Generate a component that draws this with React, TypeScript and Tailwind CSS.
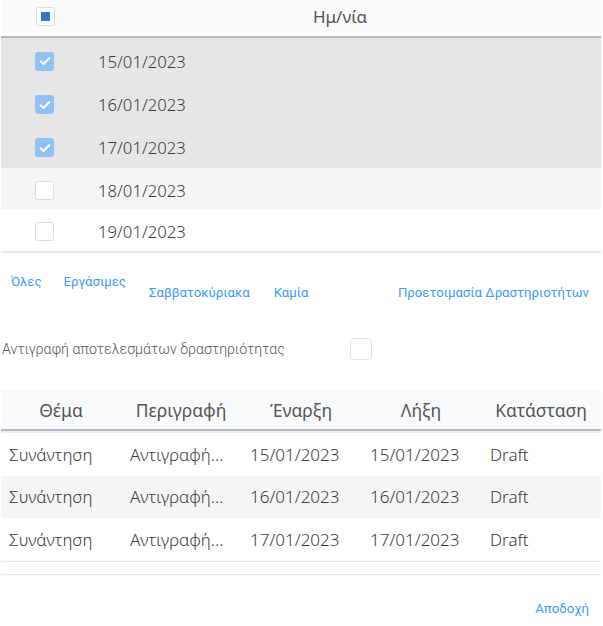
const dates = [
  { d: "15/01/2023", checked: true, h: "h-[43.4px]", bg: "bg-[#e6e6e6]" },
  { d: "16/01/2023", checked: true, h: "h-[43.4px]", bg: "bg-[#e6e6e6]" },
  { d: "17/01/2023", checked: true, h: "h-[43.4px]", bg: "bg-[#e6e6e6]" },
  { d: "18/01/2023", checked: false, h: "h-[41px]", bg: "bg-[#f5f5f5]" },
  { d: "19/01/2023", checked: false, h: "h-[42px]", bg: "bg-white" },
];

const activities = [
  { subject: "Συνάντηση", desc: "Αντιγραφή...", start: "15/01/2023", end: "15/01/2023", status: "Draft" },
  { subject: "Συνάντηση", desc: "Αντιγραφή...", start: "16/01/2023", end: "16/01/2023", status: "Draft" },
  { subject: "Συνάντηση", desc: "Αντιγραφή...", start: "17/01/2023", end: "17/01/2023", status: "Draft" },
];

function Box({ checked, partial }: { checked?: boolean; partial?: boolean }) {
  if (checked) {
    return (
      <div className="w-[19px] h-[19px] rounded-[3px] bg-[#90c2f4] flex items-center justify-center">
        <svg width="12" height="10" viewBox="0 0 12 10" fill="none">
          <path d="M1.5 5.2 L4.5 8 L10.5 2" stroke="white" strokeWidth="2" strokeLinecap="round" strokeLinejoin="round" />
        </svg>
      </div>
    );
  }
  return (
    <div className="w-[19px] h-[19px] rounded-[3px] border border-[#dcdce4] bg-white flex items-center justify-center">
      {partial && <div className="w-[9px] h-[9px] bg-[#2f7bc4]"></div>}
    </div>
  );
}

export default function App() {
  return (
    <div className="w-[603px] h-[626px] bg-white text-[#3a3a3a] font-['Noto_Sans',sans-serif] font-light">
      {/* dates */}
      <div className="pl-px pr-[2px]">
        <div className="flex h-[38px] pb-[3px] items-center bg-[#f9fafc] border-b-2 border-[#b8b8c4]">
          <div className="w-[84px] pl-[35px]">
            <Box partial />
          </div>
          <div className="flex-1 text-center text-[17px] text-[#555] font-normal pr-[6px]">Ημ/νία</div>
        </div>
        {dates.map((r) => (
          <div key={r.d} className={`flex ${r.h} pt-[3px] items-center ${r.bg}`}>
            <div className="w-[97px] pl-[34px]">
              <Box checked={r.checked} />
            </div>
            <div className="text-[16.7px]">{r.d}</div>
          </div>
        ))}
        <div className="h-[2px] bg-[#e8e8f2]"></div>
      </div>

      {/* selection links */}
      <div className="flex items-start text-[13.2px] font-normal text-[#3d9cf2] font-['Roboto',sans-serif] pt-[19px] h-[64px]">
        <span className="ml-[11px]">Όλες</span>
        <span className="ml-[22px]">Εργάσιμες</span>
        <span className="ml-[23px] mt-[11px]">Σαββατοκύριακα</span>
        <span className="ml-[24px] mt-[11px]">Καμία</span>
        <span className="ml-auto mr-[14px] mt-[11px]">Προετοιμασία Δραστηριοτήτων</span>
      </div>

      <div className="flex items-center h-[34px] mt-[15px] font-['Roboto',sans-serif]">
        <span className="ml-[2px] text-[14.2px] font-light text-[#555]">Αντιγραφή αποτελεσμάτων δραστηριότητας</span>
        <div className="ml-auto mr-[231px] w-[22px] h-[22px] rounded-[4px] border border-[#e0e0ea] bg-white"></div>
      </div>

      {/* activities */}
      <div className="mt-[24px] pl-px pr-[2px]">
        <div className="grid grid-cols-5 h-[41px] items-center bg-[#f9fafc] border-b-2 border-[#b8b8c4] text-[17.5px] text-[#555] font-normal text-center">
          <div>Θέμα</div>
          <div>Περιγραφή</div>
          <div>Έναρξη</div>
          <div>Λήξη</div>
          <div>Κατάσταση</div>
        </div>
        <div className="h-[2px] bg-[#ececf2]"></div>
        {activities.map((a, i) => (
          <div key={i} className={`grid grid-cols-5 h-[42.5px] items-center text-[17px] whitespace-nowrap ${i === 1 ? "bg-[#f5f5f5]" : "bg-white"}`}>
            <div className="pl-[8px]">{a.subject}</div>
            <div className="pl-[9px]">{a.desc}</div>
            <div className="pl-[9px]">{a.start}</div>
            <div className="pl-[9px]">{a.end}</div>
            <div className="pl-[9px]">{a.status}</div>
          </div>
        ))}
        <div className="h-px bg-[#e6e6ee]"></div>
        <div className="h-[12px]"></div>
        <div className="h-px bg-[#e6e6ee]"></div>
      </div>

      <div className="flex justify-end pr-[14px] pt-[24px] text-[13.2px] font-normal text-[#3d9cf2] font-['Roboto',sans-serif]">
        Αποδοχή
      </div>
    </div>
  );
}
